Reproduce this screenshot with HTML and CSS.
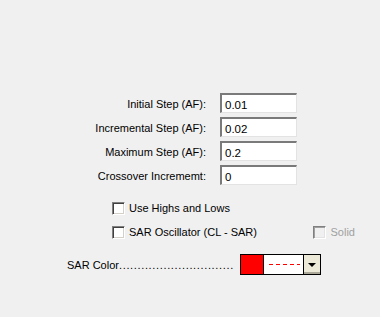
FILE: index.html
```html
<!DOCTYPE html>
<html lang="en">
<head>
    <meta charset="UTF-8">
    <title>Parabolic SAR</title>
    <link rel="stylesheet" href="styles.css">
</head>
<body>
    <div id="settings">
        <div class="field">
            <label>Initial Step (AF):</label>
            <input type="text" class="num" value="0.01">
        </div>
        <div class="field">
            <label>Incremental Step (AF):</label>
            <input type="text" class="num" value="0.02">
        </div>
        <div class="field">
            <label>Maximum Step (AF):</label>
            <input type="text" class="num" value="0.2">
        </div>
        <div class="field">
            <label>Crossover Incrememt:</label>
            <input type="text" class="num" value="0">
        </div>

        <div class="check-row">
            <span class="box"></span>
            <span>Use Highs and Lows</span>
        </div>
        <div class="check-row">
            <span class="box"></span>
            <span class="grow">SAR Oscillator (CL - SAR)</span>
            <span class="box disabled"></span>
            <span class="muted">Solid</span>
        </div>

        <div class="color-row">
            <span class="color-label">SAR Color<span class="dots">...............................</span></span>
            <div class="picker">
                <span class="swatch"></span>
                <span class="line"><span class="dash"></span></span>
                <span class="drop"><span class="arrow"></span></span>
            </div>
        </div>
    </div>
</body>
</html>
```

FILE: styles.css
```css
body, html {
    margin: 0;
    padding: 0;
    background-color: #f0f0f0;
    font-family: "Liberation Sans", Arial, sans-serif;
    font-size: 11px;
    color: #000;
}
#settings {
    padding-top: 93px;
}
.field {
    display: grid;
    grid-template-columns: 206px 77px;
    column-gap: 14px;
    align-items: center;
    height: 20px;
    margin-bottom: 4px;
}
.field label {
    text-align: right;
    padding-top: 1px;
}
.num {
    box-sizing: border-box;
    width: 77px;
    height: 20px;
    margin: 0;
    padding: 2px 3px 0;
    font: inherit;
    font-size: 11.5px;
    background: #fff;
    border-style: solid;
    border-width: 2px 1px 1px 2px;
    border-color: #7a7a7a #e3e3e3 #e3e3e3 #7a7a7a;
    outline: none;
}
.check-row {
    display: flex;
    align-items: center;
    height: 14px;
    margin-left: 112px;
    margin-right: 25px;
}
.field + .check-row {
    margin-top: 16px;
}
.check-row + .check-row {
    margin-top: 10px;
}
.box {
    box-sizing: border-box;
    width: 13px;
    height: 13px;
    margin-right: 4px;
    background: #fff;
    border-style: solid;
    border-width: 1px;
    border-color: #808080 #fff #fff #808080;
    box-shadow: inset 1px 1px 0 #404040, inset -1px -1px 0 #d4d0c8;
}
.box.disabled {
    background: #f0f0f0;
    box-shadow: inset 1px 1px 0 #a0a0a0, inset -1px -1px 0 #e3e3e3;
    margin-right: 5px;
}
.grow {
    flex: 1;
}
.muted {
    color: #a0a0a0;
}
.color-row {
    display: flex;
    align-items: center;
    margin-top: 15px;
    margin-left: 67px;
}
.color-label {
    width: 173px;
    white-space: nowrap;
}
.dots {
    letter-spacing: 0.65px;
}
.picker {
    display: flex;
    width: 81px;
    height: 21px;
    box-sizing: border-box;
    border: 1px solid #000;
    background: #fff;
}
.swatch {
    width: 22px;
    background: #ff0000;
    border-right: 1px solid #000;
}
.line {
    flex: 1;
    display: flex;
    align-items: center;
    padding: 0 3px 0 5px;
}
.dash {
    flex: 1;
    height: 1px;
    background: repeating-linear-gradient(to right, #ff0000 0 4px, transparent 4px 7px);
}
.drop {
    width: 16px;
    background: #ece9d8;
    border-left: 1px solid #000;
    display: flex;
    align-items: center;
    justify-content: center;
    box-shadow: inset 0 -2px 0 #aca899;
}
.arrow {
    width: 0;
    height: 0;
    border-left: 4px solid transparent;
    border-right: 4px solid transparent;
    border-top: 4px solid #000;
}
```
